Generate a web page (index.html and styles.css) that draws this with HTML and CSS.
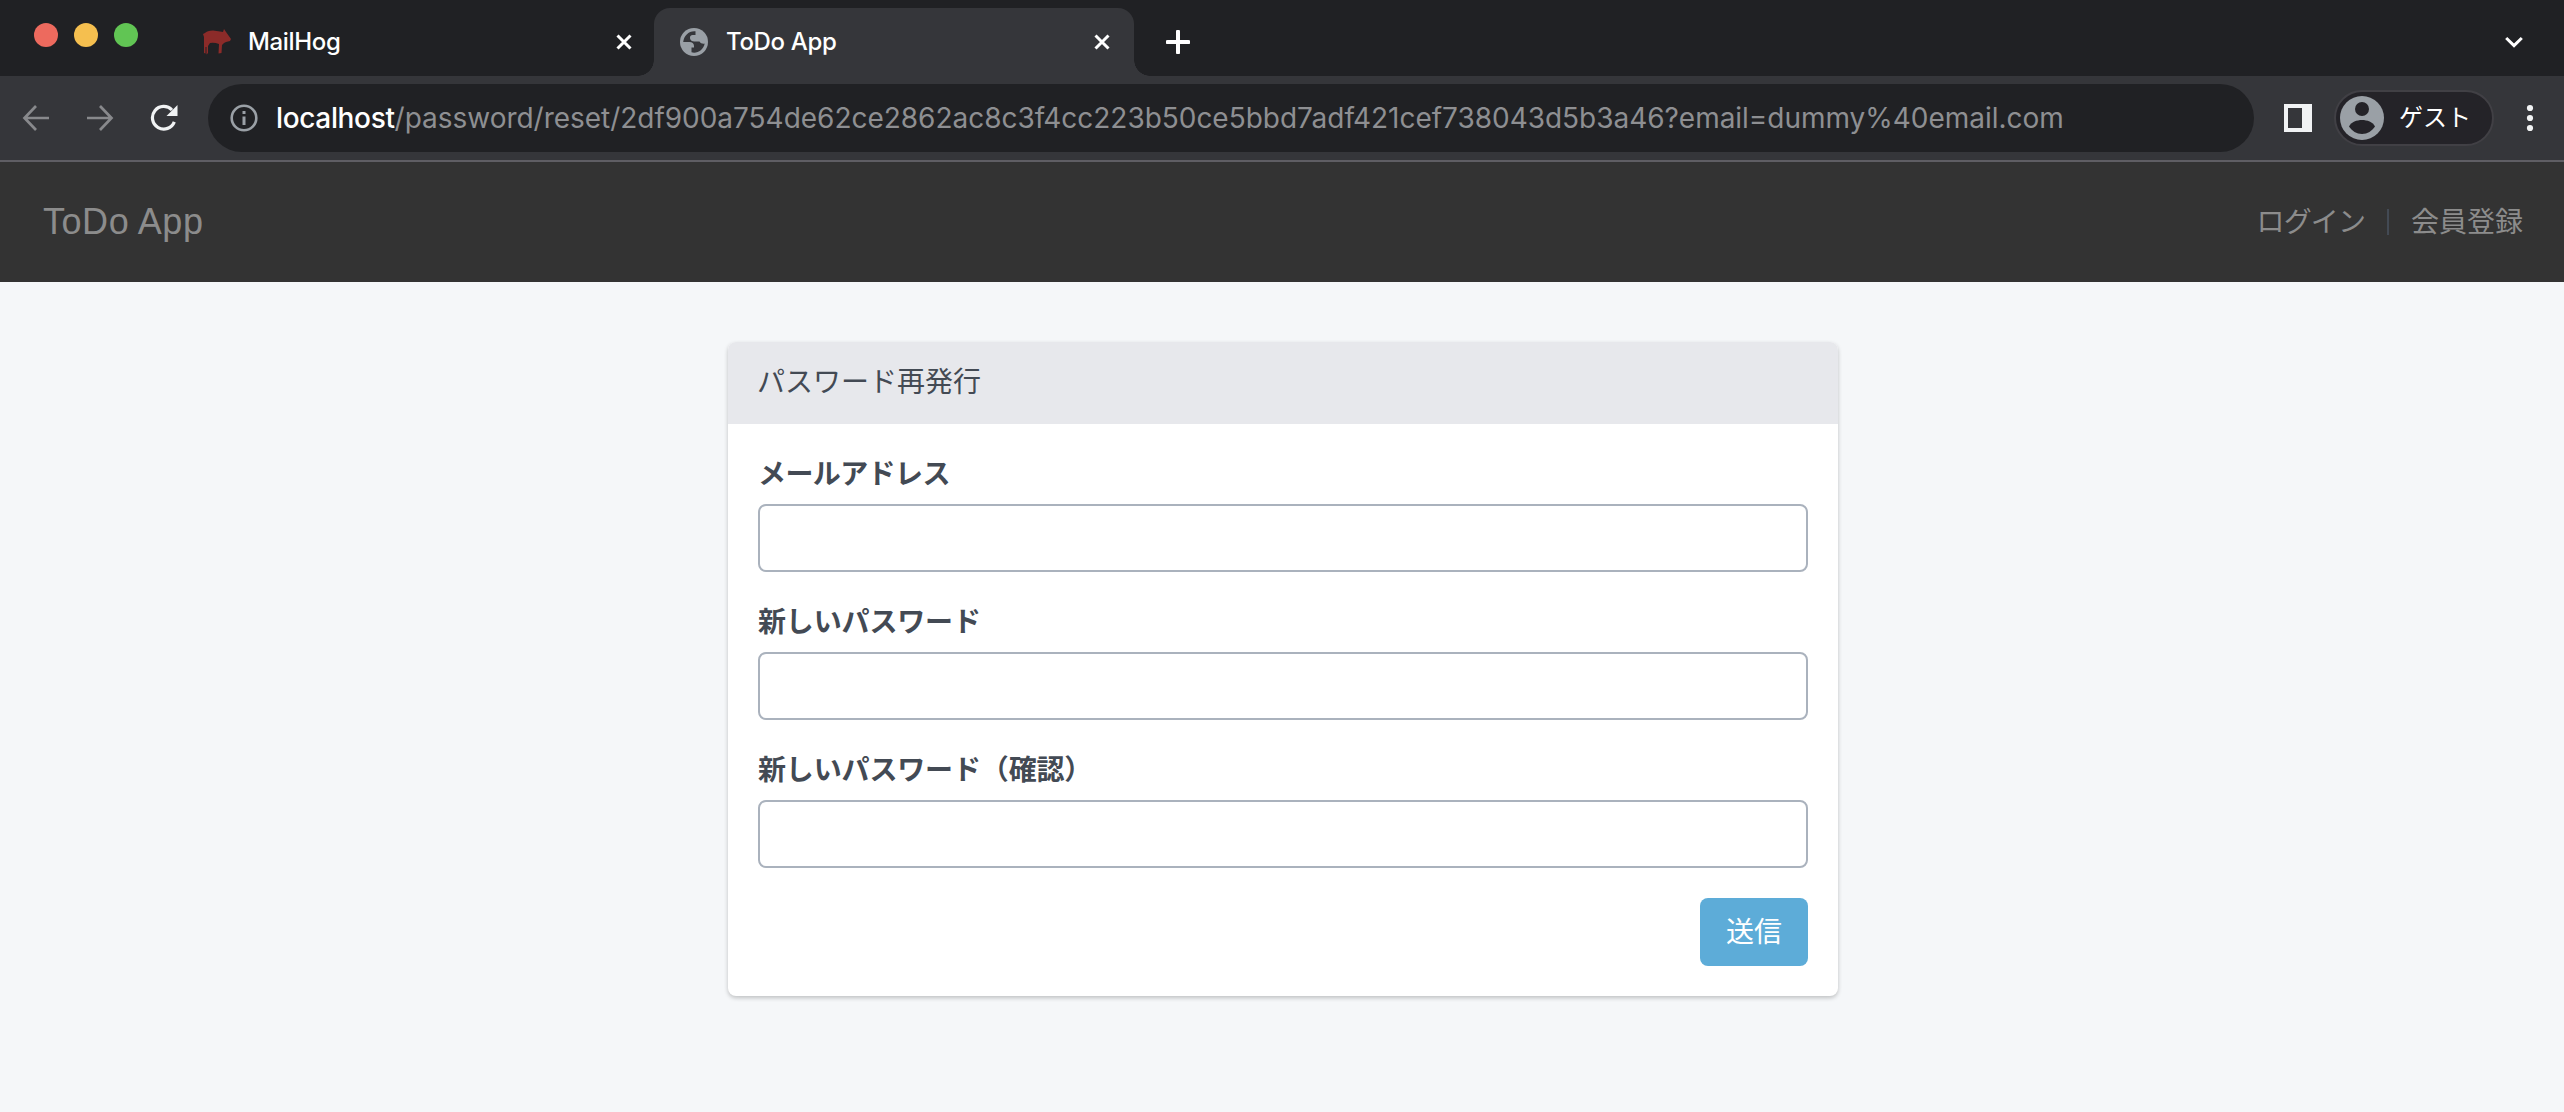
FILE: index.html
```html
<!DOCTYPE html>
<html lang="ja">
<head>
<meta charset="utf-8">
<title>ToDo App</title>
<link rel="stylesheet" href="styles.css">
</head>
<body>
<div class="tabstrip">
  <div class="lights"><i class="light red"></i><i class="light yellow"></i><i class="light green"></i></div>
  <div class="tab">
    <svg class="hog" width="30" height="26" viewBox="0 0 30 26"><path d="M1 5 L3 4 Q5 1.500 11 1.500 L18 2.500 L21 3 L22 0 L24 3 L29 10 L28 12 L24 13 L22 14 L20 16 L19.500 24 L16.500 24.500 L17 15 Q12 13 8 14 L6 17 L6 24 L4.500 25.500 L4.500 18 L3.500 18 L3.500 24.500 L2 24 L2 8 Z" fill="#8c2b29"/></svg>
    <span class="tab-title mailhog">MailHog</span>
    <svg class="close" width="20" height="20" viewBox="0 0 20 20"><path d="M3.500 3.500 16.500 16.500M16.500 3.500 3.500 16.500" stroke="#fff" stroke-width="3"/></svg>
  </div>
  <div class="tab active">
    <svg class="globe" width="28" height="28" viewBox="0 0 28 28"><circle cx="14" cy="14" r="14" fill="#9aa0a6"/><path d="M15.500 3.200C9 2.500 3.800 7.500 3.200 14H9.500C12 14 14 15.500 14 18V19.500H11.500V24.300C17 26 23.500 22 24.700 15.500C23 16 20.500 15.500 19.500 13.500H15.500C11.500 13.500 10 12 10 9.500C10 8 11 7 12.500 7H15.500Z" fill="#35363a"/></svg>
    <span class="tab-title">ToDo App</span>
    <svg class="close" width="20" height="20" viewBox="0 0 20 20"><path d="M3.500 3.500 16.500 16.500M16.500 3.500 3.500 16.500" stroke="#fff" stroke-width="3"/></svg>
  </div>
  <svg class="plus" width="24" height="24" viewBox="0 0 24 24"><path d="M12 1.500V22.500M1.500 12H22.500" stroke="#fff" stroke-width="4" stroke-linecap="round"/></svg>
  <svg class="chevron" width="20" height="14" viewBox="0 0 20 14"><path d="M2.200 3 10 10.600 17.800 3" fill="none" stroke="#fff" stroke-width="3"/></svg>
</div>
<div class="toolbar">
  <svg class="back" width="28" height="28" viewBox="0 0 28 28"><path d="M27 14H3M14 2 2.500 14 14 26" fill="none" stroke="#88898c" stroke-width="2.700"/></svg>
  <svg class="forward" width="28" height="28" viewBox="0 0 28 28"><path d="M1 14H25M14 2 25.500 14 14 26" fill="none" stroke="#88898c" stroke-width="2.700"/></svg>
  <svg class="reload" width="28" height="28" viewBox="0 0 28 28"><path d="M24.300 17.800A11.300 11.300 0 1 1 22 6" fill="none" stroke="#f1f3f4" stroke-width="3.200"/><path d="M27.500 1V12H16.500Z" fill="#f1f3f4"/></svg>
  <div class="omnibox">
    <svg width="28" height="28" viewBox="0 0 28 28"><circle cx="14" cy="14" r="12.300" fill="none" stroke="#9aa0a6" stroke-width="2.600"/><path d="M14 12.500V21M14 7V10" stroke="#9aa0a6" stroke-width="3"/></svg>
    <div class="url"><b>localhost</b><span>/password/reset/2df900a754de62ce2862ac8c3f4cc223b50ce5bbd7adf421cef738043d5b3a46?email=dummy%40email.com</span></div>
  </div>
  <svg class="panel-icon" width="28" height="28" viewBox="0 0 28 28"><path fill-rule="evenodd" d="M0 0H28V28H0ZM4 4V24H18V4Z" fill="#f1f3f4"/></svg>
  <div class="profile">
    <svg width="44" height="44" viewBox="0 0 44 44"><circle cx="22" cy="22" r="22" fill="#9aa0a6"/><circle cx="22" cy="13" r="7" fill="#242328"/><path d="M9 30.500C11 26 17 24 22 24S33 26 35 30.500C32 35 27.500 38 22 38S12 35 9 30.500Z" fill="#242328"/></svg>
    <span>ゲスト</span>
  </div>
  <svg class="dots" width="8" height="28" viewBox="0 0 8 28" fill="#f1f3f4"><circle cx="4" cy="4" r="3.100"/><circle cx="4" cy="14" r="3.100"/><circle cx="4" cy="24" r="3.100"/></svg>
</div>
<header class="navbar">
  <a class="brand">ToDo App</a>
  <nav class="links"><a class="login">ログイン</a><i class="divider"></i><a>会員登録</a></nav>
</header>
<main>
  <section class="card">
    <h1 class="card-heading">パスワード再発行</h1>
    <form class="card-body">
      <label class="kana" for="email">メールアドレス</label>
      <input id="email" type="text">
      <label for="password">新しいパスワード</label>
      <input id="password" type="password">
      <label for="confirm">新しいパスワード（確認）</label>
      <input id="confirm" type="password">
      <button type="button">送信</button>
    </form>
  </section>
</main>
</body>
</html>
```
FILE: styles.css
```css
* { box-sizing: border-box; }
body {
  margin: 0;
  height: 1112px;
  overflow: hidden;
  background: #f5f7f9;
  font-family: Inter, "Noto Sans CJK JP", sans-serif;
  font-size: 28px;
  color: #434a54;
}
svg { display: block; flex: none; }

.tabstrip {
  display: flex;
  height: 76px;
  padding: 8px 40px 0 34px;
  background: #202124;
}
.lights { display: flex; gap: 16px; width: 168px; padding-top: 15px; }
.light { width: 24px; height: 24px; border-radius: 50%; }
.red { background: #ed6a5e; }
.yellow { background: #f5bf4f; }
.green { background: #61c554; }
.tab { display: flex; align-items: center; width: 452px; height: 68px; padding-right: 20px; }
.tab-title { color: #fff; font-size: 24px; font-weight: 450; line-height: 30px; letter-spacing: -0.350px; margin-left: 18px; }
.tab-title.mailhog { margin-left: 16px; }
.close { margin-left: auto; }
.active {
  position: relative;
  width: 480px;
  padding: 0 22px 0 26px;
  border-radius: 16px 16px 0 0;
  background: #35363a;
}
.active::before, .active::after { content: ""; position: absolute; bottom: 0; width: 16px; height: 16px; }
.active::before { right: 100%; background: radial-gradient(circle at 0 0, transparent 15.500px, #35363a 16px); }
.active::after { left: 100%; background: radial-gradient(circle at 100% 0, transparent 15.500px, #35363a 16px); }
.plus { margin: 22px 0 0 32px; }
.chevron { margin: 27px 0 0 auto; }

.toolbar {
  display: flex;
  align-items: center;
  height: 86px;
  padding: 0 30px 0 22px;
  background: #35363a;
  border-bottom: 2px solid #5f5e64;
}
.forward { margin-left: 36px; }
.reload { margin-left: 36px; }
.omnibox {
  display: flex;
  align-items: center;
  width: 2046px;
  height: 68px;
  margin-left: 30px;
  padding-left: 22px;
  border-radius: 34px;
  background: #202124;
}
.url { margin-left: 18px; font-size: 28px; white-space: nowrap; color: #8e8f92; letter-spacing: -0.025px; }
.url b { color: #fff; font-weight: 500; letter-spacing: -0.350px; }
.panel-icon { margin-left: 30px; }
.profile {
  display: flex;
  align-items: center;
  width: 160px;
  height: 56px;
  margin-left: 22px;
  padding-left: 4px;
  border: 2px solid #414045;
  border-radius: 28px;
  background: #242328;
  color: #fff;
  font-size: 24px;
  font-weight: 400;
}
.profile span { margin-left: 15px; line-height: 40px; white-space: nowrap; }
.dots { margin-left: 32px; }

.navbar {
  display: flex;
  align-items: center;
  justify-content: space-between;
  height: 120px;
  padding: 0 41px 0 43px;
  background: #333;
  color: #8c8c8c;
}
.brand { font-family: "Liberation Sans", Arial, sans-serif; font-size: 36px; line-height: 40px; letter-spacing: 0.550px; }
.links { display: flex; align-items: center; line-height: 42px; }
.login { letter-spacing: -0.900px; }
.divider { width: 2px; height: 26px; margin: 0 22px; background: #434a54; }

main { display: flex; justify-content: center; padding: 60px 0 0 2px; }
.card {
  width: 1110px;
  border-radius: 8px;
  background: #fff;
  box-shadow: 0 2px 4px rgba(0, 0, 0, .22);
}
.card-heading {
  height: 82px;
  margin: 0;
  padding: 0 29px;
  border-radius: 8px 8px 0 0;
  background: #e7e8ec;
  font-size: 28px;
  font-weight: 400;
  line-height: 80px;
}
.card-body { display: flex; flex-direction: column; padding: 30px; }
label { height: 40px; margin-bottom: 10px; font-weight: 700; line-height: 40px; letter-spacing: -0.150px; }
.kana { letter-spacing: -0.600px; }
input {
  height: 68px;
  margin: 0 0 30px;
  border: 2px solid #aab2bd;
  border-radius: 8px;
  background: #fff;
}
button {
  align-self: flex-end;
  width: 108px;
  height: 68px;
  padding: 0 0 4px;
  border: 0;
  border-radius: 8px;
  background: #5dacd8;
  color: #fff;
  font: inherit;
}
```
